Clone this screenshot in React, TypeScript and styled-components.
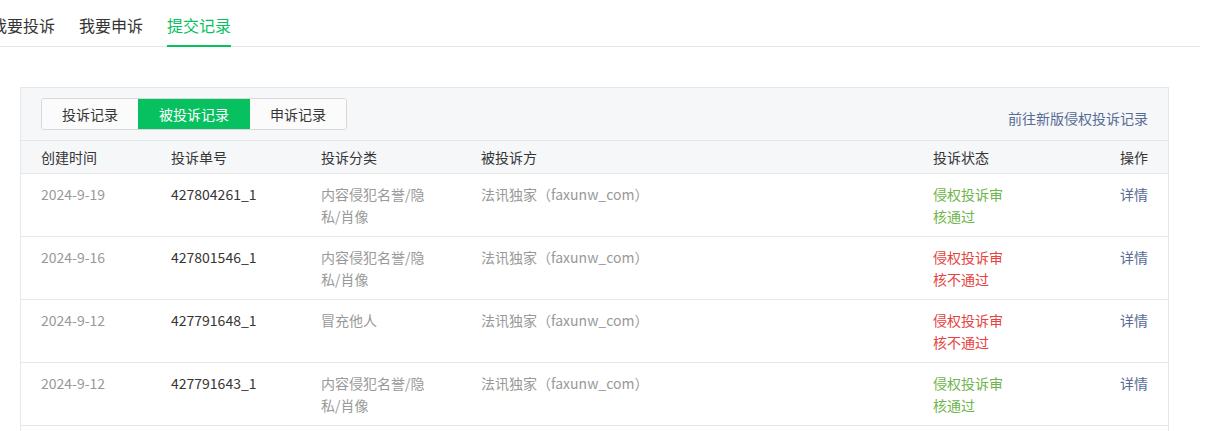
import React, { useState } from 'react';
import styled, { createGlobalStyle } from 'styled-components';

const GlobalStyle = createGlobalStyle`
  body {
    margin: 0;
    background: #fff;
    font-family: "Noto Sans CJK SC", "Noto Sans", sans-serif;
    color: #353535;
  }
  * {
    box-sizing: border-box;
  }
`;

const Page = styled.div`
  width: 1200px;
  overflow: hidden;
`;

const NavBar = styled.div`
  display: flex;
  gap: 24px;
  border-bottom: 1px solid #e5e5e5;
`;

// the first tab sits a little past the left edge in the reference
const NavItem = styled.div<{ $active?: boolean; $first?: boolean }>`
  font-size: 16px;
  line-height: 26px;
  padding: 12px 0 7px;
  margin-left: ${p => (p.$first ? '-9px' : '0')};
  margin-bottom: -1px;
  color: ${p => (p.$active ? '#07c160' : '#353535')};
  border-bottom: 2px solid ${p => (p.$active ? '#07c160' : 'transparent')};
  cursor: pointer;
`;

const Card = styled.div`
  margin: 40px 0 0 20px;
  width: 1149px;
  border: 1px solid #e7e7e7;
  border-bottom: none;
  padding-bottom: 40px;
`;

const Toolbar = styled.div`
  display: flex;
  justify-content: space-between;
  align-items: flex-end;
  padding: 10px 20px;
  background: #f6f7f9;
  border-bottom: 1px solid #e7e7e7;
`;

const Segmented = styled.div`
  display: flex;
  border: 1px solid #d9d9d9;
  border-radius: 3px;
  overflow: hidden;
  height: 32px;
`;

const SegButton = styled.button<{ $active?: boolean }>`
  font-family: inherit;
  font-size: 14px;
  line-height: 30px;
  padding: 0 ${p => (p.$active ? '21px' : '20px')};
  border: none;
  background: ${p => (p.$active ? '#07c160' : '#fbfbfb')};
  color: ${p => (p.$active ? '#fff' : '#353535')};
  cursor: pointer;
`;

const Link = styled.a`
  font-size: 14px;
  line-height: 22px;
  color: #576b95;
  margin-bottom: 1px;
  cursor: pointer;
`;

const Grid = styled.div<{ $head?: boolean }>`
  display: grid;
  grid-template-columns: 130px 150px 160px 452px 1fr auto;
  padding: ${p => (p.$head ? '5px 20px' : '9px 20px')};
  background: ${p => (p.$head ? '#f6f7f9' : '#fff')};
  border-bottom: 1px solid #e7e7e7;
  font-size: 14px;
  line-height: 22px;
  min-height: ${p => (p.$head ? '33px' : '63px')};
`;

const HeadCell = styled.div`
  color: #353535;
`;

const Cell = styled.div<{ $tone?: 'muted' | 'dark'; $wrap?: number }>`
  color: ${p => (p.$tone === 'dark' ? '#353535' : '#999')};
  max-width: ${p => (p.$wrap ? `${p.$wrap}px` : 'none')};
`;

const Status = styled.div<{ $ok: boolean }>`
  color: ${p => (p.$ok ? '#6eb54a' : '#e64340')};
  max-width: 76px;
`;

const Action = styled.a`
  color: #576b95;
  text-align: right;
  cursor: pointer;
`;

type Record = {
  date: string;
  id: string;
  category: string;
  target: string;
  ok: boolean;
};

const records: Record[] = [
  { date: '2024-9-19', id: '427804261_1', category: '内容侵犯名誉/隐私/肖像', target: '法讯独家（faxunw_com）', ok: true },
  { date: '2024-9-16', id: '427801546_1', category: '内容侵犯名誉/隐私/肖像', target: '法讯独家（faxunw_com）', ok: false },
  { date: '2024-9-12', id: '427791648_1', category: '冒充他人', target: '法讯独家（faxunw_com）', ok: false },
  { date: '2024-9-12', id: '427791643_1', category: '内容侵犯名誉/隐私/肖像', target: '法讯独家（faxunw_com）', ok: true },
];

const navs = ['我要投诉', '我要申诉', '提交记录'];
const segments = ['投诉记录', '被投诉记录', '申诉记录'];

export default function App() {
  const [seg, setSeg] = useState(1);

  return (
    <Page>
      <GlobalStyle />
      <NavBar>
        {navs.map((n, i) => (
          <NavItem key={n} $first={i === 0} $active={i === 2}>
            {n}
          </NavItem>
        ))}
      </NavBar>
      <Card>
        <Toolbar>
          <Segmented>
            {segments.map((s, i) => (
              <SegButton key={s} $active={seg === i} onClick={() => setSeg(i)}>
                {s}
              </SegButton>
            ))}
          </Segmented>
          <Link>前往新版侵权投诉记录</Link>
        </Toolbar>
        <Grid $head>
          <HeadCell>创建时间</HeadCell>
          <HeadCell>投诉单号</HeadCell>
          <HeadCell>投诉分类</HeadCell>
          <HeadCell>被投诉方</HeadCell>
          <HeadCell>投诉状态</HeadCell>
          <HeadCell>操作</HeadCell>
        </Grid>
        {records.map(r => (
          <Grid key={r.id}>
            <Cell>{r.date}</Cell>
            <Cell $tone="dark">{r.id}</Cell>
            <Cell $wrap={108}>{r.category}</Cell>
            <Cell>{r.target}</Cell>
            <Status $ok={r.ok}>{r.ok ? '侵权投诉审核通过' : '侵权投诉审核不通过'}</Status>
            <Action>详情</Action>
          </Grid>
        ))}
      </Card>
    </Page>
  );
}
